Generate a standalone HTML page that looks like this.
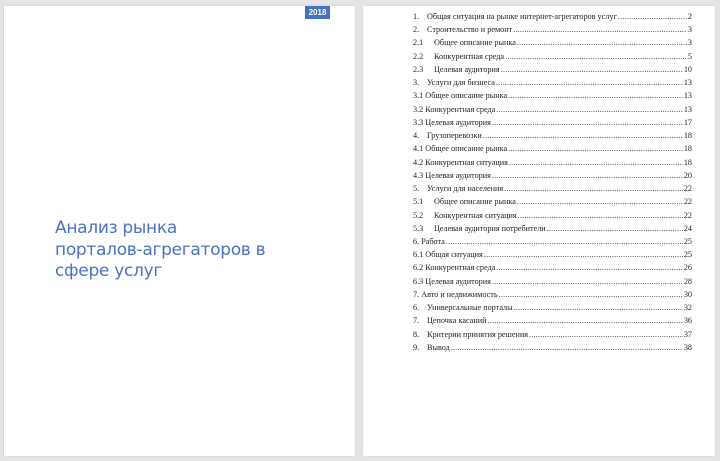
<!DOCTYPE html>
<html><head><meta charset="utf-8"><style>
body{margin:0;width:720px;height:461px;background:#e4e4e4;position:relative;overflow:hidden}
.pg{position:absolute;top:6px;height:450px;background:#fff;box-shadow:0 0 1px #bbb}
#p1{left:4px;width:351px}
#p2{left:363px;width:352px}
.badge{position:absolute;left:301px;top:0;width:25px;height:13px;background:#4472c4;color:#fff;font:bold 8px "Liberation Sans",sans-serif;text-align:center;line-height:13px}
.title{position:absolute;left:51px;top:212px;color:#4a72c6;font:17px/21.6px "DejaVu Sans","Liberation Sans",sans-serif;letter-spacing:-0.3px}
.toc{position:absolute;left:50px;top:4px;width:279px;font:8.2px "Liberation Serif","Noto Serif CJK SC",serif;color:#222}
.r{display:flex;height:13.24px;line-height:13.24px;white-space:nowrap}
.n{display:inline-block}
.d{flex:1;overflow:hidden;margin:0 1px}
.d:after{content:"......................................................................................................................................................................";letter-spacing:0.2px;color:#444}
</style></head><body>
<div class="pg" id="p1"><div class="badge">2018</div>
<div class="title">Анализ рынка<br>порталов-агрегаторов в<br>сфере услуг</div></div>
<div class="pg" id="p2"><div class="toc">
<div class="r"><span class="n" style="width:14px">1.</span><span>Общая ситуация на рынке интернет-агрегаторов услуг</span><span class="d"></span><span>2</span></div>
<div class="r"><span class="n" style="width:14px">2.</span><span>Строительство и ремонт</span><span class="d"></span><span>3</span></div>
<div class="r"><span class="n" style="width:21px">2.1</span><span>Общее описание рынка</span><span class="d"></span><span>3</span></div>
<div class="r"><span class="n" style="width:21px">2.2</span><span>Конкурентная среда</span><span class="d"></span><span>5</span></div>
<div class="r"><span class="n" style="width:21px">2.3</span><span>Целевая аудитория</span><span class="d"></span><span>10</span></div>
<div class="r"><span class="n" style="width:14px">3.</span><span>Услуги для бизнеса</span><span class="d"></span><span>13</span></div>
<div class="r"><span>3.1 Общее описание рынка</span><span class="d"></span><span>13</span></div>
<div class="r"><span>3.2 Конкурентная среда</span><span class="d"></span><span>13</span></div>
<div class="r"><span>3.3 Целевая аудитория</span><span class="d"></span><span>17</span></div>
<div class="r"><span class="n" style="width:14px">4.</span><span>Грузоперевозки</span><span class="d"></span><span>18</span></div>
<div class="r"><span>4.1 Общее описание рынка</span><span class="d"></span><span>18</span></div>
<div class="r"><span>4.2 Конкурентная ситуация</span><span class="d"></span><span>18</span></div>
<div class="r"><span>4.3 Целевая аудитория</span><span class="d"></span><span>20</span></div>
<div class="r"><span class="n" style="width:14px">5.</span><span>Услуги для населения</span><span class="d"></span><span>22</span></div>
<div class="r"><span class="n" style="width:21px">5.1</span><span>Общее описание рынка</span><span class="d"></span><span>22</span></div>
<div class="r"><span class="n" style="width:21px">5.2</span><span>Конкурентная ситуация</span><span class="d"></span><span>22</span></div>
<div class="r"><span class="n" style="width:21px">5.3</span><span>Целевая аудитория потребители</span><span class="d"></span><span>24</span></div>
<div class="r"><span>6. Работа</span><span class="d"></span><span>25</span></div>
<div class="r"><span>6.1 Общая ситуация</span><span class="d"></span><span>25</span></div>
<div class="r"><span>6.2 Конкурентная среда</span><span class="d"></span><span>26</span></div>
<div class="r"><span>6.3 Целевая аудитория</span><span class="d"></span><span>28</span></div>
<div class="r"><span>7. Авто и недвижимость</span><span class="d"></span><span>30</span></div>
<div class="r"><span class="n" style="width:14px">6.</span><span>Универсальные порталы</span><span class="d"></span><span>32</span></div>
<div class="r"><span class="n" style="width:14px">7.</span><span>Цепочка касаний</span><span class="d"></span><span>36</span></div>
<div class="r"><span class="n" style="width:14px">8.</span><span>Критерии принятия решения</span><span class="d"></span><span>37</span></div>
<div class="r"><span class="n" style="width:14px">9.</span><span>Вывод</span><span class="d"></span><span>38</span></div>
</div></div>
</body></html>
